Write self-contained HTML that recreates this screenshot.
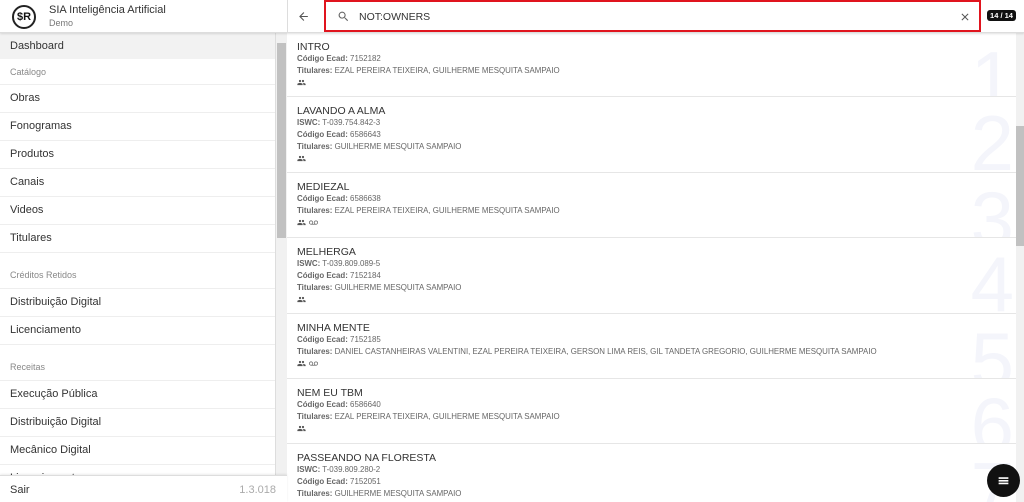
<!DOCTYPE html>
<html><head><meta charset="utf-8"><style>
*{box-sizing:border-box;margin:0;padding:0}
body{width:1024px;height:502px;overflow:hidden;font-family:"Liberation Sans",sans-serif;background:#fff;position:relative;color:#333}
.hdr{position:absolute;left:0;top:0;width:1024px;height:33px;border-bottom:1px solid #ddd;box-shadow:0 1px 2px rgba(0,0,0,.12);background:#fff;z-index:2}
.logo{position:absolute;left:12px;top:5px;width:24px;height:24px;border-radius:50%;border:2px solid #222;font-weight:bold;font-size:11px;line-height:20px;text-align:center;color:#111}
.t1{position:absolute;left:49px;top:4px;font-size:11px;color:#333}
.t2{position:absolute;left:49px;top:18px;font-size:9px;color:#777}
.side{position:absolute;left:0;top:33px;width:276px;height:442px;overflow:hidden;border-right:1px solid #ddd}
.it{height:28px;line-height:27px;padding-left:10px;font-size:11px;color:#333;border-bottom:1px solid #eee}
.sub{height:26px;line-height:26px;padding-left:10px;font-size:9px;color:#888;border-bottom:1px solid #eee}
.sb{position:absolute;top:33px;width:11px;background:#f1f1f1}
.th{position:absolute;background:#c1c1c1}
.foot{position:absolute;left:0;top:475px;width:287px;height:27px;border-top:1px solid #ddd;box-shadow:0 -1px 2px rgba(0,0,0,.08);background:#fff;font-size:11px}
.search{position:absolute;left:324px;top:0;width:657px;height:32px;border:2px solid #e0141e;background:#fff}
.list{position:absolute;left:287px;top:33px;width:729px;height:469px;overflow:hidden}
.card{position:relative;padding:8px 10px 0;border-bottom:1px solid #e6e6e6;font-size:7.9px;color:#666;line-height:12px;overflow:hidden}
.card .ti{font-size:10.5px;color:#333;line-height:12px;margin-bottom:0px}
.card b{color:#666}
.num{position:absolute;right:2px;top:6px;font-size:78px;color:#f4f5fb;line-height:80px;font-family:"Liberation Sans",sans-serif}
.ic{height:11px;display:flex;gap:3px;align-items:center}
.fab{position:absolute;left:987px;top:464px;width:33px;height:33px;border-radius:50%;background:#111}
</style></head><body>
<svg width="0" height="0" style="position:absolute"><defs>
<symbol id="pp" viewBox="0 0 24 24"><path d="M16 11a3 3 0 1 0 0-6 3 3 0 0 0 0 6zm-8 0a3 3 0 1 0 0-6 3 3 0 0 0 0 6zm0 2c-2.3 0-7 1.2-7 3.5V19h14v-2.5C15 14.2 10.3 13 8 13zm8 0h-1c1.2.8 2 2 2 3.5V19h6v-2.5c0-2.3-4.7-3.5-7-3.5z" fill="#555"/></symbol>
<symbol id="vm" viewBox="0 0 24 24"><path d="M18.5 6.5a5.5 5.5 0 0 0-4.2 9H9.7a5.5 5.5 0 1 0-4.2 2h13a5.5 5.5 0 0 0 0-11zm-13 9a3.5 3.5 0 1 1 0-7 3.5 3.5 0 0 1 0 7zm13 0a3.5 3.5 0 1 1 0-7 3.5 3.5 0 0 1 0 7z" fill="#666"/></symbol>
</defs></svg>
<div class="hdr">
<div class="logo">$R</div>
<div class="t1">SIA Inteligência Artificial</div>
<div class="t2">Demo</div>
<div style="position:absolute;left:287px;top:0;width:1px;height:33px;background:#ddd"></div>
<svg style="position:absolute;left:297px;top:10px" width="13" height="13" viewBox="0 0 24 24"><path d="M20 11H7.8l5.6-5.6L12 4l-8 8 8 8 1.4-1.4L7.8 13H20z" fill="#555"/></svg>
<div class="search">
<svg style="position:absolute;left:11px;top:8px" width="13" height="13" viewBox="0 0 24 24"><path d="M15.5 14h-.8l-.3-.3A6.5 6.5 0 1 0 9.5 16a6.5 6.5 0 0 0 4.2-1.6l.3.3v.8l5 5 1.5-1.5-5-5zm-6 0a4.5 4.5 0 1 1 0-9 4.5 4.5 0 0 1 0 9z" fill="#666"/></svg>
<div style="position:absolute;left:33px;top:9px;font-size:10.5px;color:#333">NOT:OWNERS</div>
<svg style="position:absolute;left:633px;top:9px" width="12" height="12" viewBox="0 0 24 24"><path d="M19 6.4 17.6 5 12 10.6 6.4 5 5 6.4 10.6 12 5 17.6 6.4 19 12 13.4 17.6 19 19 17.6 13.4 12z" fill="#555"/></svg>
</div>
<div style="position:absolute;left:987px;top:10px;width:29px;height:11px;background:#111;border-radius:3px;color:#fff;font-size:7.5px;font-weight:bold;text-align:center;line-height:11px">14 / 14</div>
</div>
<div class="side">
<div class="it" style="background:#f2f2f2;height:26px;line-height:26px;border:none">Dashboard</div>
<div class="sub">Catálogo</div>
<div class="it">Obras</div><div class="it">Fonogramas</div><div class="it">Produtos</div><div class="it">Canais</div><div class="it">Videos</div><div class="it">Titulares</div>
<div class="sub" style="height:36px;line-height:44px">Créditos Retidos</div>
<div class="it">Distribuição Digital</div><div class="it">Licenciamento</div>
<div class="sub" style="height:36px;line-height:44px">Receitas</div>
<div class="it">Execução Pública</div><div class="it">Distribuição Digital</div><div class="it">Mecânico Digital</div><div class="it">Licenciamento</div>
</div>
<div class="sb" style="left:276px;height:442px"><div class="th" style="left:1px;top:10px;width:9px;height:195px"></div></div>
<div class="foot"><span style="position:absolute;left:10px;top:8px;color:#333">Sair</span><span style="position:absolute;right:11px;top:8px;color:#aaa">1.3.018</span></div>
<div class="list">
<div class="card" style="height:64px"><div class="num">1</div><div class="ti">INTRO</div><div><b>Código Ecad:</b> 7152182</div><div><b>Titulares:</b> EZAL PEREIRA TEIXEIRA, GUILHERME MESQUITA SAMPAIO</div><div class="ic"><svg width="9" height="9"><use href="#pp"/></svg></div></div>
<div class="card" style="height:76px"><div class="num">2</div><div class="ti">LAVANDO A ALMA</div><div><b>ISWC:</b> T-039.754.842-3</div><div><b>Código Ecad:</b> 6586643</div><div><b>Titulares:</b> GUILHERME MESQUITA SAMPAIO</div><div class="ic"><svg width="9" height="9"><use href="#pp"/></svg></div></div>
<div class="card" style="height:65px"><div class="num">3</div><div class="ti">MEDIEZAL</div><div><b>Código Ecad:</b> 6586638</div><div><b>Titulares:</b> EZAL PEREIRA TEIXEIRA, GUILHERME MESQUITA SAMPAIO</div><div class="ic"><svg width="9" height="9"><use href="#pp"/></svg><svg width="9" height="9"><use href="#vm"/></svg></div></div>
<div class="card" style="height:76px"><div class="num">4</div><div class="ti">MELHERGA</div><div><b>ISWC:</b> T-039.809.089-5</div><div><b>Código Ecad:</b> 7152184</div><div><b>Titulares:</b> GUILHERME MESQUITA SAMPAIO</div><div class="ic"><svg width="9" height="9"><use href="#pp"/></svg></div></div>
<div class="card" style="height:65px"><div class="num">5</div><div class="ti">MINHA MENTE</div><div><b>Código Ecad:</b> 7152185</div><div><b>Titulares:</b> DANIEL CASTANHEIRAS VALENTINI, EZAL PEREIRA TEIXEIRA, GERSON LIMA REIS, GIL TANDETA GREGORIO, GUILHERME MESQUITA SAMPAIO</div><div class="ic"><svg width="9" height="9"><use href="#pp"/></svg><svg width="9" height="9"><use href="#vm"/></svg></div></div>
<div class="card" style="height:65px"><div class="num">6</div><div class="ti">NEM EU TBM</div><div><b>Código Ecad:</b> 6586640</div><div><b>Titulares:</b> EZAL PEREIRA TEIXEIRA, GUILHERME MESQUITA SAMPAIO</div><div class="ic"><svg width="9" height="9"><use href="#pp"/></svg></div></div>
<div class="card" style="height:76px;border:none"><div class="num">7</div><div class="ti">PASSEANDO NA FLORESTA</div><div><b>ISWC:</b> T-039.809.280-2</div><div><b>Código Ecad:</b> 7152051</div><div><b>Titulares:</b> GUILHERME MESQUITA SAMPAIO</div></div>
</div>
<div class="sb" style="left:1016px;width:8px;height:469px"><div class="th" style="left:0;top:93px;width:8px;height:120px"></div></div>
<div class="fab"><svg style="position:absolute;left:10px;top:10px" width="13" height="13" viewBox="0 0 24 24"><path d="M3 6h18v3H3zm0 5h18v3H3zm0 5h18v3H3z" fill="#fff"/></svg></div>
</body></html>
